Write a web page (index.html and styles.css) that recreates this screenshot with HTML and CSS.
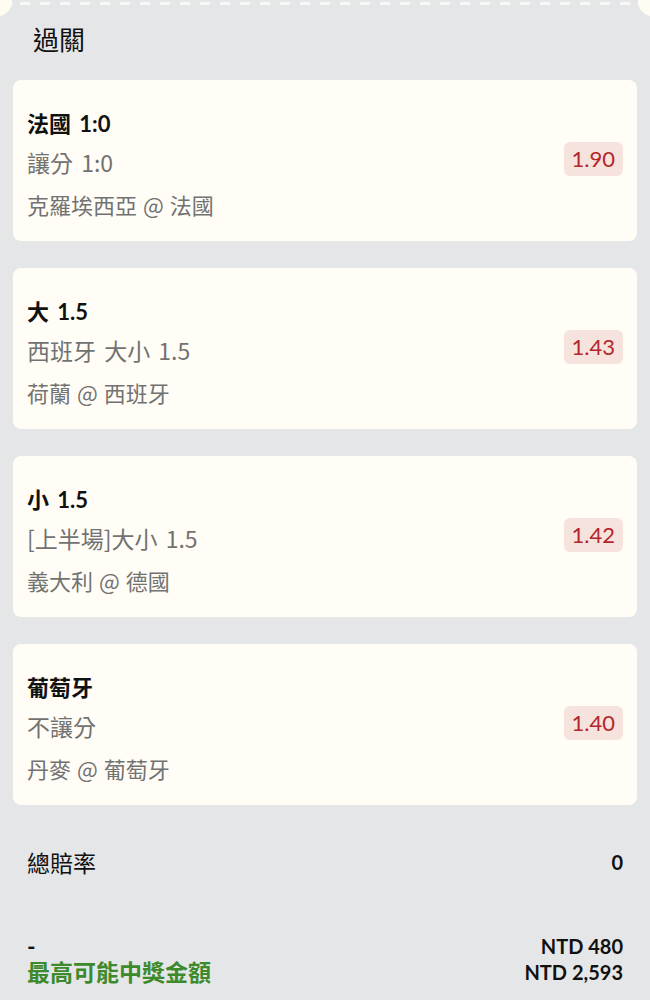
FILE: index.html
```html
<!DOCTYPE html>
<html lang="zh-Hant">
<head>
  <meta charset="UTF-8">
  <meta name="viewport" content="width=device-width, initial-scale=1.0">
  <title>過關</title>
  <link rel="stylesheet" href="styles.css">
</head>
<body>
  <div class="slip">
    <div class="tear"></div>

    <h2 class="slip-title">過關</h2>

    <div class="bets">
      <div class="bet">
        <div class="bet-info">
          <div class="bet-pick">法國 1:0</div>
          <div class="bet-market">讓分 1:0</div>
          <div class="bet-match">克羅埃西亞 @ 法國</div>
        </div>
        <div class="odds">1.90</div>
      </div>

      <div class="bet">
        <div class="bet-info">
          <div class="bet-pick">大 1.5</div>
          <div class="bet-market">西班牙 大小 1.5</div>
          <div class="bet-match">荷蘭 @ 西班牙</div>
        </div>
        <div class="odds">1.43</div>
      </div>

      <div class="bet">
        <div class="bet-info">
          <div class="bet-pick">小 1.5</div>
          <div class="bet-market">[上半場]大小 1.5</div>
          <div class="bet-match">義大利 @ 德國</div>
        </div>
        <div class="odds">1.42</div>
      </div>

      <div class="bet">
        <div class="bet-info">
          <div class="bet-pick">葡萄牙</div>
          <div class="bet-market">不讓分</div>
          <div class="bet-match">丹麥 @ 葡萄牙</div>
        </div>
        <div class="odds">1.40</div>
      </div>
    </div>

    <div class="summary-row">
      <span class="summary-label">總賠率</span>
      <span class="summary-value">0</span>
    </div>

    <div class="payout">
      <div class="payout-labels">
        <span>-</span>
        <span class="payout-max">最高可能中獎金額</span>
      </div>
      <div class="payout-values">
        <span>NTD 480</span>
        <span>NTD 2,593</span>
      </div>
    </div>
  </div>
</body>
</html>
```

FILE: styles.css
```css
body {
  margin: 0;
  background-color: #e5e6e8;
  font-family: Lato, "Noto Sans CJK TC", sans-serif;
  color: #111;
}
.slip {
  padding-bottom: 20px;
}
.tear {
  position: relative;
  height: 20px;
}
.tear::before {
  content: "";
  position: absolute;
  left: 20px;
  right: 20px;
  top: 2px;
  height: 3px;
  background: repeating-linear-gradient(90deg, #f8f8f6 0 10px, transparent 10px 20px);
}
.tear::after {
  content: "";
  position: absolute;
  top: -16px;
  left: -20px;
  right: -20px;
  height: 32px;
  background:
    radial-gradient(circle at 16px 16px, #fffdf2 16px, transparent 17px) left / 32px 32px no-repeat,
    radial-gradient(circle at 16px 16px, #fffdf2 16px, transparent 17px) right / 32px 32px no-repeat;
}
.slip-title {
  margin: 0;
  padding: 6px 33px 0;
  height: 54px;
  font-size: 26px;
  font-weight: normal;
  line-height: 28px;
}
.bets {
  display: flex;
  flex-direction: column;
  gap: 27px;
  padding: 0 13px;
}
.bet {
  display: flex;
  align-items: center;
  justify-content: space-between;
  background-color: #fffdf5;
  border-radius: 8px;
  padding: 28px 14px 21px;
}
.bet-info {
  font-size: 22px;
  line-height: 32px;
}
.bet-pick {
  font-weight: bold;
  color: #111;
  word-spacing: 3px;
}
.bet-market,
.bet-match {
  font-family: "Noto Sans CJK TC", sans-serif;
  color: #727272;
}
.bet-market {
  margin-top: 6px;
  font-size: 23px;
  word-spacing: 3px;
}
.bet-match {
  margin-top: 10px;
  word-spacing: 1px;
}
.odds {
  margin-top: -10px;
  padding: 0 8px;
  height: 34px;
  line-height: 34px;
  border-radius: 6px;
  background-color: #f7e3de;
  color: #b3262b;
  font-size: 22px;
}
.summary-row {
  display: flex;
  justify-content: space-between;
  align-items: center;
  padding: 0 27px;
  margin-top: 42px;
  height: 30px;
  font-size: 23px;
}
.summary-value {
  font-size: 20px;
  font-weight: bold;
}
.payout {
  display: flex;
  justify-content: space-between;
  padding: 0 27px;
  margin-top: 56px;
  line-height: 26px;
}
.payout-labels,
.payout-values {
  display: flex;
  flex-direction: column;
  font-weight: bold;
}
.payout-labels {
  font-size: 23px;
}
.payout-values {
  align-items: flex-end;
  font-size: 20px;
}
.payout-max {
  color: #3c8a2c;
}
```
